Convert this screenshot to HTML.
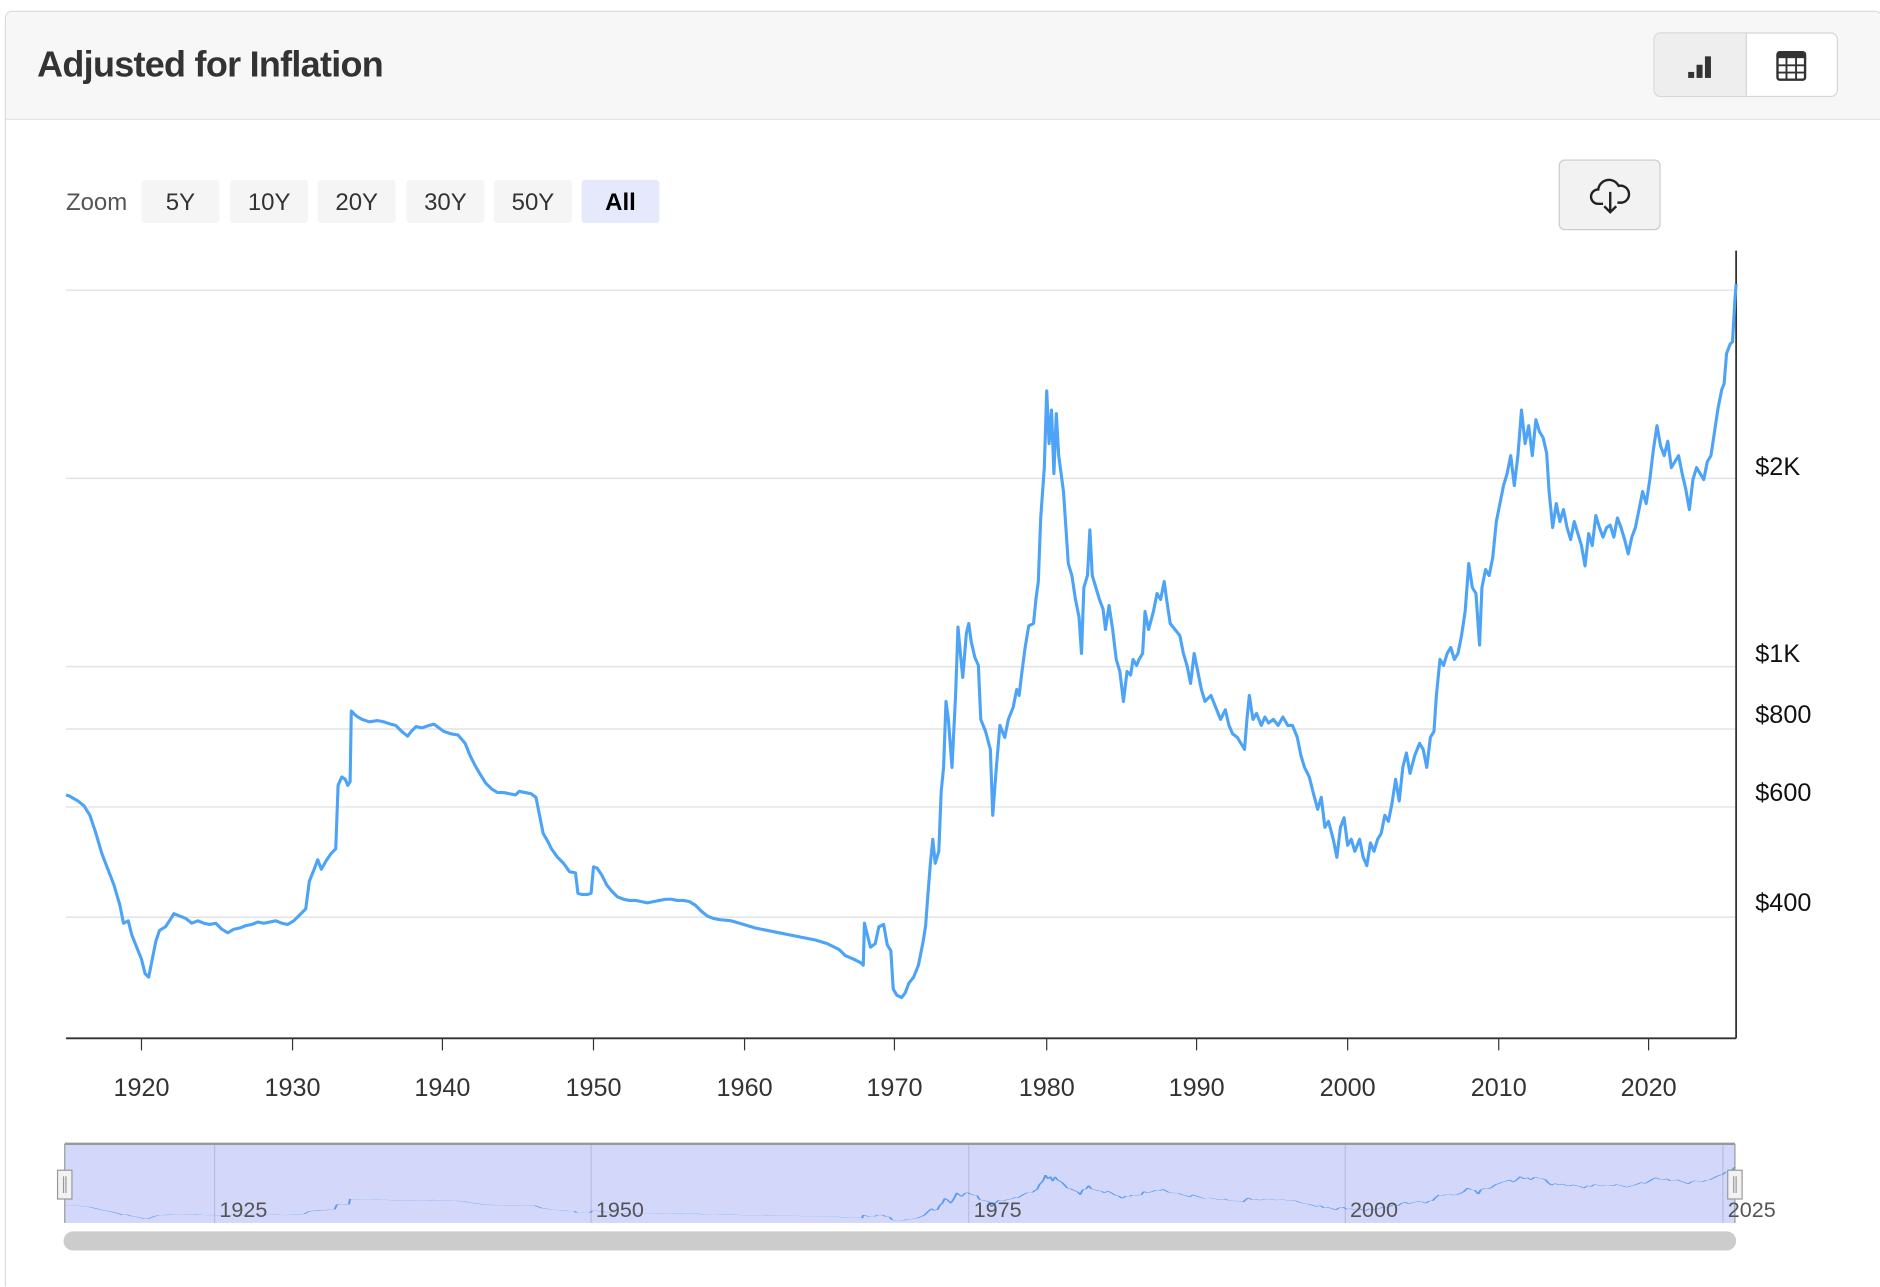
<!DOCTYPE html>
<html><head><style>
html,body{margin:0;padding:0;background:#fff;overflow:hidden;width:1880px;height:1286px}
#w{position:absolute;left:0;top:0;width:1568px;height:1073px;overflow:hidden;transform-origin:0 0;transform:scale(1.19898,1.199);font-family:"Liberation Sans",Roboto,sans-serif}
.card{position:absolute;left:4px;top:9px;width:1564px;height:1100px;border:1px solid #dcdcdc;border-radius:6px 6px 0 0}
.hdr{position:absolute;left:0;top:0;right:0;height:89px;background:#f7f7f7;border-bottom:1px solid #dcdcdc;border-radius:6px 6px 0 0}
.title{position:absolute;left:26px;top:28px;font-size:30px;font-weight:bold;color:#333;letter-spacing:-0.6px}
.grp{position:absolute;left:1374px;top:17px;width:152px;height:52px;border:1px solid #d6d6d6;border-radius:6px;background:#fff;overflow:hidden}
.grp .a{position:absolute;left:0;top:0;width:76px;height:52px;background:#eeeeee;border-right:1px solid #d6d6d6}
.zl{position:absolute;left:55px;top:158px;font-size:20px;color:#555}
.zb{position:absolute;top:150px;width:65px;height:36px;background:#f5f5f5;border-radius:3px;font-size:20px;color:#333;text-align:center;line-height:38px}
.dl{position:absolute;left:1300px;top:133px;width:83px;height:57px;border:1px solid #ccc;border-radius:5px;background:#f2f2f2}
.yl{position:absolute;left:1464px;font-size:21px;color:#111}
.xl{position:absolute;top:896px;font-size:21px;color:#333;width:60px;margin-left:-30px;text-align:center}
.nl{position:absolute;top:999px;font-size:18px;color:#555}
</style></head><body><div id="w">
<div class="card"><div class="hdr"><div class="title">Adjusted for Inflation</div>
<div class="grp"><div class="a"></div>
<svg style="position:absolute;left:26px;top:15px" width="24" height="24" viewBox="0 0 24 24"><rect x="2" y="17" width="5" height="5" fill="#333"/><rect x="9" y="11" width="5" height="11" fill="#333"/><rect x="16" y="4" width="5" height="18" fill="#333"/></svg>
<svg style="position:absolute;left:101px;top:14px" width="26" height="26" viewBox="0 0 26 26"><rect x="1.5" y="1.5" width="23" height="23" rx="2" fill="none" stroke="#333" stroke-width="2"/><rect x="1.5" y="1.5" width="23" height="5" fill="#333"/><path d="M1.5 12.5H24.5M1.5 18.5H24.5M9 6V24M17 6V24" stroke="#333" stroke-width="1.6"/></svg>
</div></div></div>
<div class="zl">Zoom</div>
<div class="zb" style="left:118px">5Y</div><div class="zb" style="left:192px">10Y</div><div class="zb" style="left:265px">20Y</div><div class="zb" style="left:339px">30Y</div><div class="zb" style="left:412px">50Y</div><div class="zb" style="left:485px;background:#e6e9fc;color:#000;font-weight:bold">All</div>
<div class="dl"><svg style="position:absolute;left:24px;top:12px" width="36" height="34" viewBox="0 0 36 34"><path d="M12 24H8a6 6 0 0 1 0-12a9 9 0 0 1 17-3a7 7 0 0 1 3 14h-4" fill="none" stroke="#222" stroke-width="2"/><path d="M18 14V31M13 26l5 5l5-5" fill="none" stroke="#222" stroke-width="2"/></svg></div>
<svg style="position:absolute;left:0;top:0" width="1568" height="1073">
<g stroke="#e3e3e3" stroke-width="1.2"><path d="M55 242H1448M55 399H1448M55 556H1448M55 608H1448M55 673H1448M55 765H1448"/></g>
<path d="M1448 209V866M55 866H1448" stroke="#333" stroke-width="1.5"/>
<g stroke="#333"><path d="M118 866v10M244 866v10M369 866v10M495 866v10M621 866v10M746 866v10M873 866v10M998 866v10M1124 866v10M1250 866v10M1375 866v10"/></g>
<defs><polyline id="L" fill="none" points="55,663 58,664 65,668 70,672 75,680 80,695 85,712 90,725 95,738 100,755 103,770 107,768 110,780 114,790 118,800 121,812 124,815 127,800 130,785 133,776 138,773 142,767 145,762 150,764 155,766 160,770 165,768 170,770 175,771 180,770 185,775 190,778 195,775 200,774 205,772 210,771 215,769 220,770 225,769 230,768 235,770 240,771 245,768 250,763 255,758 258,735 262,725 265,717 268,725 272,718 276,712 280,708 282,655 285,648 288,650 290,655 292,652 293,593 297,597 302,600 308,602 315,601 320,602 326,604 330,605 335,610 340,614 343,610 347,606 352,607 358,605 362,604 366,607 370,610 376,612 382,613 388,620 392,630 396,638 400,645 405,653 410,658 415,661 420,661 425,662 430,663 433,660 438,661 443,662 447,665 450,680 453,695 457,702 460,708 465,715 470,720 475,727 480,728 482,745 485,746 490,746 493,745 495,723 498,724 502,730 506,738 510,743 515,748 520,750 525,751 530,751 535,752 540,753 545,752 550,751 555,750 560,750 565,751 570,751 575,752 580,755 585,760 590,764 595,766 600,767 610,768 620,771 630,774 640,776 650,778 660,780 670,782 680,784 690,787 700,792 705,797 712,800 718,803 720,805 721,770 723,778 726,790 730,787 733,773 737,771 740,788 743,793 745,825 748,830 752,832 755,828 758,820 762,815 766,805 770,785 772,772 774,745 776,720 778,700 780,720 783,710 785,660 787,640 789,585 791,600 794,640 797,580 799,523 801,545 803,565 806,528 808,520 810,535 813,548 816,555 818,600 822,610 826,625 828,680 831,640 834,605 838,615 841,600 845,590 848,575 850,580 852,563 855,540 858,522 862,520 864,500 866,485 868,432 871,390 873,326 875,370 877,342 879,395 881,345 883,380 885,395 887,410 889,440 891,470 894,480 897,500 900,515 902,545 904,490 907,480 909,442 911,480 914,490 917,500 920,508 922,525 925,505 928,525 931,550 934,560 937,585 940,560 943,563 945,550 948,555 950,550 953,545 955,510 958,525 962,510 965,495 968,500 971,485 973,500 976,520 980,525 984,530 987,545 990,555 993,570 996,545 999,560 1002,575 1005,585 1010,580 1014,590 1018,600 1022,592 1025,605 1028,612 1032,615 1035,620 1038,625 1040,600 1042,580 1045,600 1048,595 1052,605 1055,598 1058,603 1062,600 1066,605 1070,598 1074,605 1078,605 1082,615 1085,630 1088,640 1092,648 1095,660 1099,675 1102,665 1105,690 1108,685 1112,700 1115,715 1118,690 1121,682 1124,705 1127,700 1130,710 1134,700 1137,715 1140,722 1143,703 1146,710 1149,700 1152,695 1155,680 1158,685 1161,670 1164,650 1167,668 1170,640 1173,628 1176,645 1180,630 1184,620 1187,625 1190,640 1193,615 1196,610 1198,580 1201,550 1204,555 1207,545 1210,540 1213,550 1216,545 1219,530 1222,510 1225,470 1228,490 1231,495 1234,538 1236,490 1239,475 1242,480 1245,465 1248,435 1251,420 1254,405 1257,395 1260,380 1263,405 1266,380 1269,342 1272,370 1275,355 1278,380 1281,350 1284,360 1287,365 1290,378 1292,410 1295,440 1298,420 1301,435 1304,425 1307,440 1310,450 1313,435 1316,445 1319,455 1322,472 1325,445 1328,455 1331,430 1334,440 1337,448 1340,440 1343,438 1346,448 1349,432 1352,440 1355,450 1358,462 1361,448 1364,440 1367,425 1370,410 1373,420 1376,400 1379,375 1382,355 1385,372 1388,380 1391,368 1394,390 1397,385 1400,380 1403,395 1406,408 1409,425 1412,400 1415,390 1418,395 1421,400 1424,385 1427,380 1430,360 1433,340 1436,325 1438,320 1440,295 1443,287 1445,285 1447,250 1448,237"/></defs>
<use href="#L" stroke="#4da3f5" stroke-width="2.6" stroke-linejoin="round"/>
<rect x="54" y="954" width="1393" height="66" fill="#d3d8fb"/>
<path d="M179 954V1020M493 954V1020M808 954V1020M1122 954V1020M1437 954V1020" stroke="#b8bde0" stroke-width="1"/>
<g transform="translate(-1,955.55) scale(1,0.075)"><use href="#L" stroke="#5a9cf0" stroke-width="1.8" vector-effect="non-scaling-stroke"/></g>
<path d="M54 954H1447" stroke="#999" stroke-width="2"/>
<path d="M54 954V1020M1447 954V1020" stroke="#999" stroke-width="1"/>
<rect x="48" y="976" width="12" height="24" fill="#f2f2f2" stroke="#999"/><path d="M53 981v14M55 981v14" stroke="#999"/>
<rect x="1441" y="976" width="12" height="24" fill="#f2f2f2" stroke="#999"/><path d="M1446 981v14M1448 981v14" stroke="#999"/>
<rect x="53" y="1027" width="1395" height="16" rx="8" fill="#cccccc"/>
</svg>
<div class="yl" style="top:378px">$2K</div><div class="yl" style="top:534px">$1K</div><div class="yl" style="top:585px">$800</div><div class="yl" style="top:650px">$600</div><div class="yl" style="top:742px">$400</div>
<div class="xl" style="left:118px">1920</div><div class="xl" style="left:244px">1930</div><div class="xl" style="left:369px">1940</div><div class="xl" style="left:495px">1950</div><div class="xl" style="left:621px">1960</div><div class="xl" style="left:746px">1970</div><div class="xl" style="left:873px">1980</div><div class="xl" style="left:998px">1990</div><div class="xl" style="left:1124px">2000</div><div class="xl" style="left:1250px">2010</div><div class="xl" style="left:1375px">2020</div>
<div class="nl" style="left:183px">1925</div><div class="nl" style="left:497px">1950</div><div class="nl" style="left:812px">1975</div><div class="nl" style="left:1126px">2000</div><div class="nl" style="left:1441px">2025</div>
</div></body></html>
